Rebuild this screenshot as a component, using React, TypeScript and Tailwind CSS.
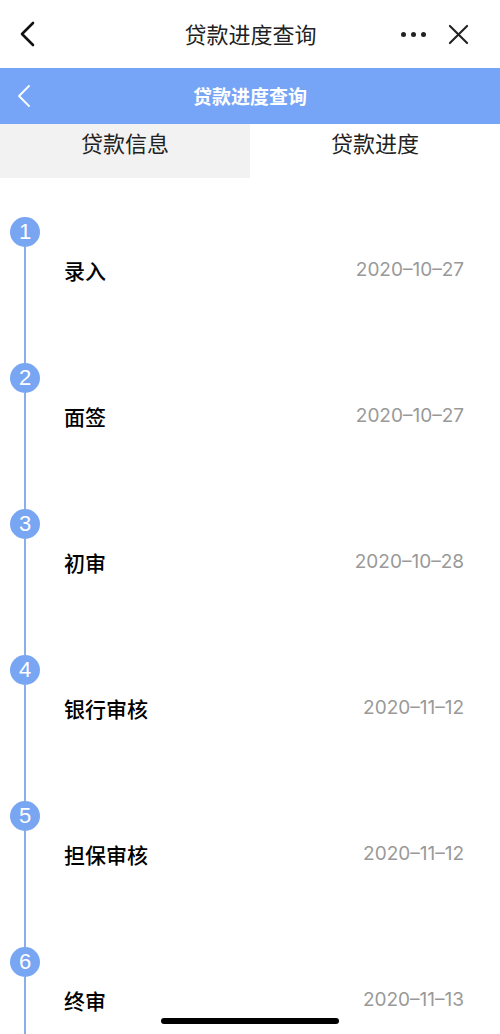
import React from "react";

const steps = [
  { n: 1, label: "录入", date: "2020-10-27" },
  { n: 2, label: "面签", date: "2020-10-27" },
  { n: 3, label: "初审", date: "2020-10-28" },
  { n: 4, label: "银行审核", date: "2020-11-12" },
  { n: 5, label: "担保审核", date: "2020-11-12" },
  { n: 6, label: "终审", date: "2020-11-13" },
];

export default function App() {
  return (
    <div
      className="relative w-[500px] h-[1034px] overflow-hidden bg-white text-black"
      style={{ fontFamily: '"Noto Sans CJK SC", "Noto Sans", sans-serif' }}
    >
      {/* system nav bar */}
      <div className="h-[68px] flex items-center pl-[18px] pr-[31px]">
        <svg width="20" height="28" viewBox="0 0 20 28" fill="none" stroke="#111" strokeWidth="2.6" strokeLinecap="round" strokeLinejoin="round">
          <path d="M15 3 L4 14 L15 25" />
        </svg>
        <div className="flex-1 text-center text-[22px] text-[#222] pl-[62px] pb-[2px]">贷款进度查询</div>
        <div className="flex items-center gap-[5px] mr-[22px]">
          <span className="w-[5px] h-[5px] rounded-full bg-[#222]" />
          <span className="w-[5px] h-[5px] rounded-full bg-[#222]" />
          <span className="w-[5px] h-[5px] rounded-full bg-[#222]" />
        </div>
        <svg width="21" height="21" viewBox="0 0 22 22" fill="none" stroke="#222" strokeWidth="2.2" strokeLinecap="round">
          <path d="M2 2 L20 20 M20 2 L2 20" />
        </svg>
      </div>

      {/* blue header */}
      <div className="h-[56px] bg-[#76a4f6] flex items-center px-[16px]">
        <svg width="16" height="24" viewBox="0 0 16 24" fill="none" stroke="#fff" strokeWidth="1.8" strokeLinecap="round" strokeLinejoin="round">
          <path d="M13 2 L3 12 L13 22" />
        </svg>
        <div className="flex-1 text-center text-[19px] font-semibold text-white pr-[16px]">贷款进度查询</div>
      </div>

      {/* tabs */}
      <div className="flex h-[54px]">
        <div className="w-[250px] bg-[#f2f2f2] flex justify-center pt-[2px] text-[22px] text-[#222]">贷款信息</div>
        <div className="flex-1 flex justify-center pt-[2px] text-[22px] text-[#222]">贷款进度</div>
      </div>

      {/* timeline */}
      <div className="pt-[39px] pl-[10px]">
        {steps.map((s) => (
          <div key={s.n} className="flex h-[146px]">
            <div className="w-[30px] flex flex-col items-center">
              <div className="w-[30px] h-[30px] shrink-0 rounded-full bg-[#78a6f2] text-white text-[22px] leading-[30px] text-center font-light" style={{ fontFamily: '"Liberation Sans", sans-serif' }}>
                {s.n}
              </div>
              <div className="flex-1 w-[2px] bg-[#8aaee9]" />
            </div>
            <div className="flex-1 flex items-start justify-between pl-[24px] pr-[36px] pt-[39px]">
              <span className="text-[21px] font-medium leading-[28px]">{s.label}</span>
              <span className="text-[19px] leading-[28px] text-[#999]" style={{ fontFamily: 'Inter, "Noto Sans", sans-serif' }}>
                {s.date.replace(/-/g, "–")}
              </span>
            </div>
          </div>
        ))}
      </div>

      {/* home indicator */}
      <div className="absolute left-[161px] bottom-[10px] w-[178px] h-[6px] rounded-full bg-black" />
    </div>
  );
}
